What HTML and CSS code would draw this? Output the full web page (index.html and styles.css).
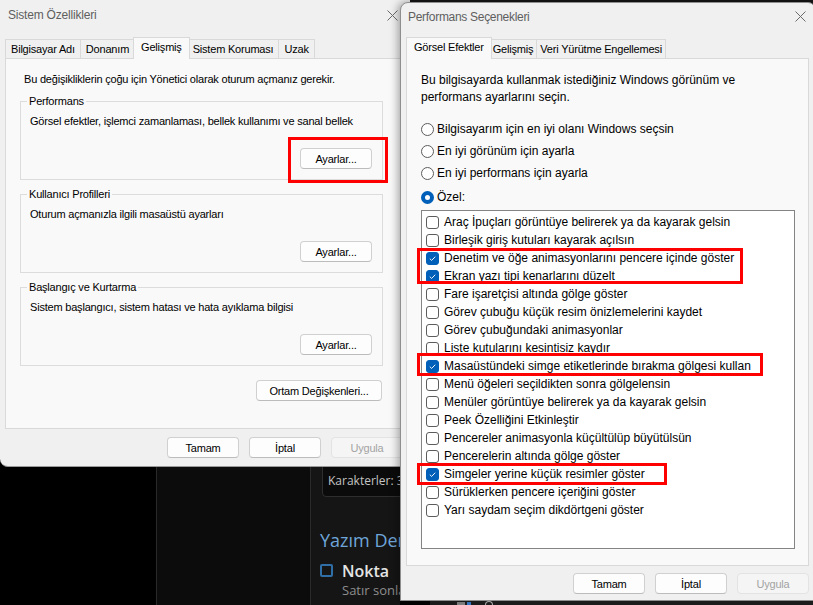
FILE: index.html
```html
<html>
  <head>
    <title>Sistem Özellikleri</title>
    <link rel="stylesheet" href="styles.css">
  </head>
  <body>
    <div class="desktop">
      <div class="col col-a"></div>
      <div class="col col-b"></div>
      <div class="col col-c">
        <div class="chars">Karakterler: 3</div>
        <h2 class="spell">Yazım Denetimi</h2>
        <div class="opt">
          <span class="obox"></span>
          <div>
            <div class="otitle">Nokta</div>
            <div class="osub">Satır sonlarında nokta</div>
          </div>
        </div>
      </div>
    </div>

    <div class="taskbar">
      <span class="tb-gap"></span>
      <span class="tb-icon"></span>
      <span class="tb-icon blue"></span>
      <span class="tb-ring"></span>
    </div>

    <!-- Sistem Özellikleri -->
    <div class="window win-sys">
      <div class="titlebar">
        <span>Sistem Özellikleri</span>
        <svg class="close" width="11" height="11" viewBox="0 0 11 11"><path d="M0.5 0.5 L10.5 10.5 M10.5 0.5 L0.5 10.5" stroke="#6b6b6b" stroke-width="1" fill="none"/></svg>
      </div>
      <div class="tabs">
        <div class="tab">Bilgisayar Adı</div>
        <div class="tab">Donanım</div>
        <div class="tab active">Gelişmiş</div>
        <div class="tab">Sistem Koruması</div>
        <div class="tab">Uzak</div>
      </div>
      <div class="panel panel-sys">
        <div class="note">Bu değişikliklerin çoğu için Yönetici olarak oturum açmanız gerekir.</div>

        <fieldset class="group">
          <legend>Performans</legend>
          <div class="desc">Görsel efektler, işlemci zamanlaması, bellek kullanımı ve sanal bellek</div>
          <div class="group-actions"><button class="btn">Ayarlar...</button></div>
        </fieldset>

        <fieldset class="group">
          <legend>Kullanıcı Profilleri</legend>
          <div class="desc">Oturum açmanızla ilgili masaüstü ayarları</div>
          <div class="group-actions"><button class="btn">Ayarlar...</button></div>
        </fieldset>

        <fieldset class="group">
          <legend>Başlangıç ve Kurtarma</legend>
          <div class="desc">Sistem başlangıcı, sistem hatası ve hata ayıklama bilgisi</div>
          <div class="group-actions"><button class="btn">Ayarlar...</button></div>
        </fieldset>

        <div class="env-row"><button class="btn btn-wide">Ortam Değişkenleri...</button></div>
      </div>
      <div class="footer">
        <button class="btn">Tamam</button>
        <button class="btn">İptal</button>
        <button class="btn disabled">Uygula</button>
      </div>
    </div>

    <!-- Performans Seçenekleri -->
    <div class="window win-perf">
      <div class="titlebar">
        <span>Performans Seçenekleri</span>
        <svg class="close" width="11" height="11" viewBox="0 0 11 11"><path d="M0.5 0.5 L10.5 10.5 M10.5 0.5 L0.5 10.5" stroke="#6b6b6b" stroke-width="1" fill="none"/></svg>
      </div>
      <div class="tabs">
        <div class="tab active">Görsel Efektler</div>
        <div class="tab">Gelişmiş</div>
        <div class="tab">Veri Yürütme Engellemesi</div>
      </div>
      <div class="panel panel-perf">
        <div class="intro">Bu bilgisayarda kullanmak istediğiniz Windows görünüm ve<br>performans ayarlarını seçin.</div>

        <div class="radios">
          <div class="radio"><span class="rd"></span>Bilgisayarım için en iyi olanı Windows seçsin</div>
          <div class="radio"><span class="rd"></span>En iyi görünüm için ayarla</div>
          <div class="radio"><span class="rd"></span>En iyi performans için ayarla</div>
          <div class="radio radio-last"><span class="rd on"></span>Özel:</div>
        </div>

        <div class="list">
          <div class="item"><span class="cb"></span>Araç İpuçları görüntüye belirerek ya da kayarak gelsin</div>
          <div class="item"><span class="cb"></span>Birleşik giriş kutuları kayarak açılsın</div>
          <div class="item"><span class="cb on"><svg width="13" height="13" viewBox="0 0 13 13"><path d="M3.3 6.7 L5.5 8.8 L9.7 4.4" stroke="#fff" stroke-width="1.1" fill="none"/></svg></span>Denetim ve öğe animasyonlarını pencere içinde göster</div>
          <div class="item"><span class="cb on"><svg width="13" height="13" viewBox="0 0 13 13"><path d="M3.3 6.7 L5.5 8.8 L9.7 4.4" stroke="#fff" stroke-width="1.1" fill="none"/></svg></span>Ekran yazı tipi kenarlarını düzelt</div>
          <div class="item"><span class="cb"></span>Fare işaretçisi altında gölge göster</div>
          <div class="item"><span class="cb"></span>Görev çubuğu küçük resim önizlemelerini kaydet</div>
          <div class="item"><span class="cb"></span>Görev çubuğundaki animasyonlar</div>
          <div class="item"><span class="cb"></span>Liste kutularını kesintisiz kaydır</div>
          <div class="item"><span class="cb on"><svg width="13" height="13" viewBox="0 0 13 13"><path d="M3.3 6.7 L5.5 8.8 L9.7 4.4" stroke="#fff" stroke-width="1.1" fill="none"/></svg></span>Masaüstündeki simge etiketlerinde bırakma gölgesi kullan</div>
          <div class="item"><span class="cb"></span>Menü öğeleri seçildikten sonra gölgelensin</div>
          <div class="item"><span class="cb"></span>Menüler görüntüye belirerek ya da kayarak gelsin</div>
          <div class="item"><span class="cb"></span>Peek Özelliğini Etkinleştir</div>
          <div class="item"><span class="cb"></span>Pencereler animasyonla küçültülüp büyütülsün</div>
          <div class="item"><span class="cb"></span>Pencerelerin altında gölge göster</div>
          <div class="item"><span class="cb on"><svg width="13" height="13" viewBox="0 0 13 13"><path d="M3.3 6.7 L5.5 8.8 L9.7 4.4" stroke="#fff" stroke-width="1.1" fill="none"/></svg></span>Simgeler yerine küçük resimler göster</div>
          <div class="item"><span class="cb"></span>Sürüklerken pencere içeriğini göster</div>
          <div class="item"><span class="cb"></span>Yarı saydam seçim dikdörtgeni göster</div>
        </div>
      </div>
      <div class="footer">
        <button class="btn">Tamam</button>
        <button class="btn">İptal</button>
        <button class="btn disabled">Uygula</button>
      </div>
    </div>

    <!-- red highlight boxes -->
    <div class="mark mark-settings"></div>
    <div class="mark mark-anim"></div>
    <div class="mark mark-shadow"></div>
    <div class="mark mark-thumbs"></div>
  </body>
</html>
```

FILE: styles.css
```css
body {
  margin: 0;
  width: 813px;
  height: 605px;
  overflow: hidden;
  position: relative;
  background: #151515;
  font-family: "Liberation Sans", Arial, sans-serif;
  font-size: 12px;
  color: #000;
}

/* desktop behind the dialogs */
.desktop {
  display: flex;
  height: 605px;
}

.col-a {
  width: 156px;
  background: #000;
  border-right: 1px solid #2a2a2a;
}

.col-b {
  width: 153px;
  background: #0c0c0c;
  border-right: 1px solid #2a2a2a;
}

.col-c {
  flex: 1;
  background: #151515;
  padding: 440px 0 0 9px;
  font-family: "Open Sans", "Noto Sans", sans-serif;
}

.chars {
  margin-left: 2px;
  height: 57px;
  box-sizing: border-box;
  border: 1px solid #2e2e2e;
  border-radius: 0 0 0 4px;
  background: #0b0b0b;
  color: #c4c4c4;
  font-size: 12px;
  line-height: 16px;
  display: flex;
  align-items: flex-end;
  padding: 0 0 7px 5px;
  white-space: nowrap;
}

.spell {
  margin: 31px 0 0;
  font-size: 18px;
  line-height: 24px;
  font-weight: 400;
  color: #6fa6da;
  white-space: nowrap;
}

.opt {
  display: flex;
  gap: 9px;
  margin-top: 9px;
}

.obox {
  width: 13px;
  height: 13px;
  margin-top: 3px;
  border: 2px solid #2f6ea6;
  border-radius: 2px;
  flex: none;
  box-sizing: border-box;
}

.otitle {
  color: #e4e4e4;
  font-size: 16px;
  line-height: 20px;
  font-weight: 600;
}

.osub {
  color: #8e8e8e;
  font-size: 13px;
  line-height: 18px;
  white-space: nowrap;
}

.taskbar {
  position: absolute;
  left: 400px;
  top: 600px;
  width: 413px;
  height: 5px;
  background: #1f1f1f;
  display: flex;
  align-items: flex-end;
}

.tb-gap {
  width: 30px;
  height: 5px;
  background: #000;
}

.tb-icon {
  width: 8px;
  height: 3px;
  margin-left: 27px;
  background: #8a8a8a;
}

.tb-icon.blue {
  margin-left: 2px;
  width: 4px;
  background: #3b82d6;
}

.tb-ring {
  width: 6px;
  height: 3px;
  margin-left: 14px;
  border: 1px solid #bdbdbd;
  border-bottom: none;
  border-radius: 4px 4px 0 0;
}

/* dialog windows */
.window {
  position: absolute;
  background: #f0f0f0;
  box-sizing: border-box;
}

.win-sys {
  left: 0;
  top: 0;
  width: 410px;
  height: 467px;
  border-radius: 0 0 8px 8px;
  border-bottom: 1px solid #9a9a9a;
  font-size: 11px;
  letter-spacing: -0.2px;
}

.win-perf {
  left: 400px;
  top: 2px;
  width: 416px;
  height: 599px;
  border: 1px solid #8e8e8e;
  border-radius: 8px 8px 0 0;
  box-shadow: -2px 0 8px rgba(0, 0, 0, 0.35);
}

.titlebar {
  height: 30px;
  display: flex;
  align-items: center;
  justify-content: space-between;
  padding: 0 12px 0 8px;
  color: #5f5f5f;
  font-size: 12px;
  letter-spacing: -0.2px;
}

.win-perf .titlebar {
  height: 27px;
  padding: 0 9px 0 7px;
  letter-spacing: -0.3px;
}

.tabs {
  display: flex;
  align-items: flex-end;
  height: 21px;
  margin-top: 7px;
  padding-left: 6px;
  position: relative;
  z-index: 1;
  font-size: 11px;
  letter-spacing: -0.2px;
}

.win-perf .tabs {
  padding-left: 7px;
}

.tab {
  height: 19px;
  line-height: 18px;
  padding: 0 5px;
  box-sizing: border-box;
  border: 1px solid #d9d9d9;
  border-bottom: none;
  margin-left: -1px;
  background: #f0f0f0;
  white-space: nowrap;
}

.win-perf .tab {
  padding: 0 3px;
}

.tab.active,
.win-perf .tab.active {
  height: 22px;
  line-height: 19px;
  padding: 0 7px;
  margin: 0 -2px -1px -2px;
  background: #f9f9f9;
  position: relative;
  z-index: 2;
}

.panel {
  border: 1px solid #d9d9d9;
  background: #f9f9f9;
  box-sizing: border-box;
  margin-left: 5px;
}

.panel-sys {
  width: 399px;
  height: 371px;
  padding: 12px 0 0 14px;
}

.note {
  padding-left: 4px;
  line-height: 16px;
}

.group {
  width: 363px;
  min-width: 0;
  box-sizing: border-box;
  margin: 6px 0 0;
  padding: 0 10px 10px 6px;
  border: 1px solid #dcdcdc;
}

.group legend {
  padding: 0 2px;
  line-height: 16px;
}

.desc {
  margin-top: 4px;
  padding-left: 3px;
  line-height: 16px;
  white-space: nowrap;
}

.group-actions {
  display: flex;
  justify-content: flex-end;
  margin-top: 19px;
}

.env-row {
  width: 362px;
  display: flex;
  justify-content: flex-end;
  margin-top: 14px;
}

.btn {
  width: 72px;
  height: 21px;
  box-sizing: border-box;
  padding: 0;
  border: 1px solid #d0d0d0;
  border-bottom-color: #bcbcbc;
  border-radius: 4px;
  background: #fdfdfd;
  font-family: inherit;
  font-size: 11px;
  letter-spacing: -0.2px;
  color: #000;
  line-height: 18px;
}

.btn-wide {
  width: 126px;
}

.btn.disabled {
  color: #a3a3a3;
  background: #f5f5f5;
  border-color: #e3e3e3;
}

.footer {
  display: flex;
  justify-content: flex-end;
  gap: 10px;
  margin: 8px 0 0 5px;
  width: 398px;
}

.panel-perf {
  width: 403px;
  height: 508px;
  padding: 13px 0 0 14px;
}

.win-perf .footer {
  margin-top: 7px;
  width: 403px;
}

.intro {
  line-height: 17px;
}

.radios {
  margin-top: 12px;
}

.radio {
  height: 22px;
  display: flex;
  align-items: center;
  gap: 3px;
}

.radio-last {
  margin-top: 2px;
}

.rd {
  width: 13px;
  height: 13px;
  box-sizing: border-box;
  border: 1px solid #5c5c5c;
  border-radius: 50%;
  background: #fff;
  flex: none;
}

.rd.on {
  border: 4px solid #005fb8;
}

.list {
  width: 374px;
  height: 339px;
  box-sizing: border-box;
  margin-top: 2px;
  border: 1px solid #848484;
  background: #fff;
  padding: 2px 0 0 4px;
}

.item {
  height: 18px;
  display: flex;
  align-items: center;
  gap: 5px;
  white-space: nowrap;
}

.cb {
  width: 13px;
  height: 13px;
  box-sizing: border-box;
  border: 1px solid #5c5c5c;
  border-radius: 3px;
  background: #fff;
  flex: none;
  display: flex;
  align-items: center;
  justify-content: center;
}

.cb.on {
  background: #005fb8;
  border-color: #005fb8;
}

/* red highlight boxes drawn over the screenshot */
.mark {
  position: absolute;
  border: 3px solid #f00;
  box-sizing: border-box;
  z-index: 5;
}

.mark-settings {
  left: 288px;
  top: 137px;
  width: 100px;
  height: 46px;
}

.mark-anim {
  left: 417px;
  top: 248px;
  width: 326px;
  height: 36px;
}

.mark-shadow {
  left: 417px;
  top: 353px;
  width: 346px;
  height: 23px;
}

.mark-thumbs {
  left: 417px;
  top: 463px;
  width: 250px;
  height: 22px;
}
```
